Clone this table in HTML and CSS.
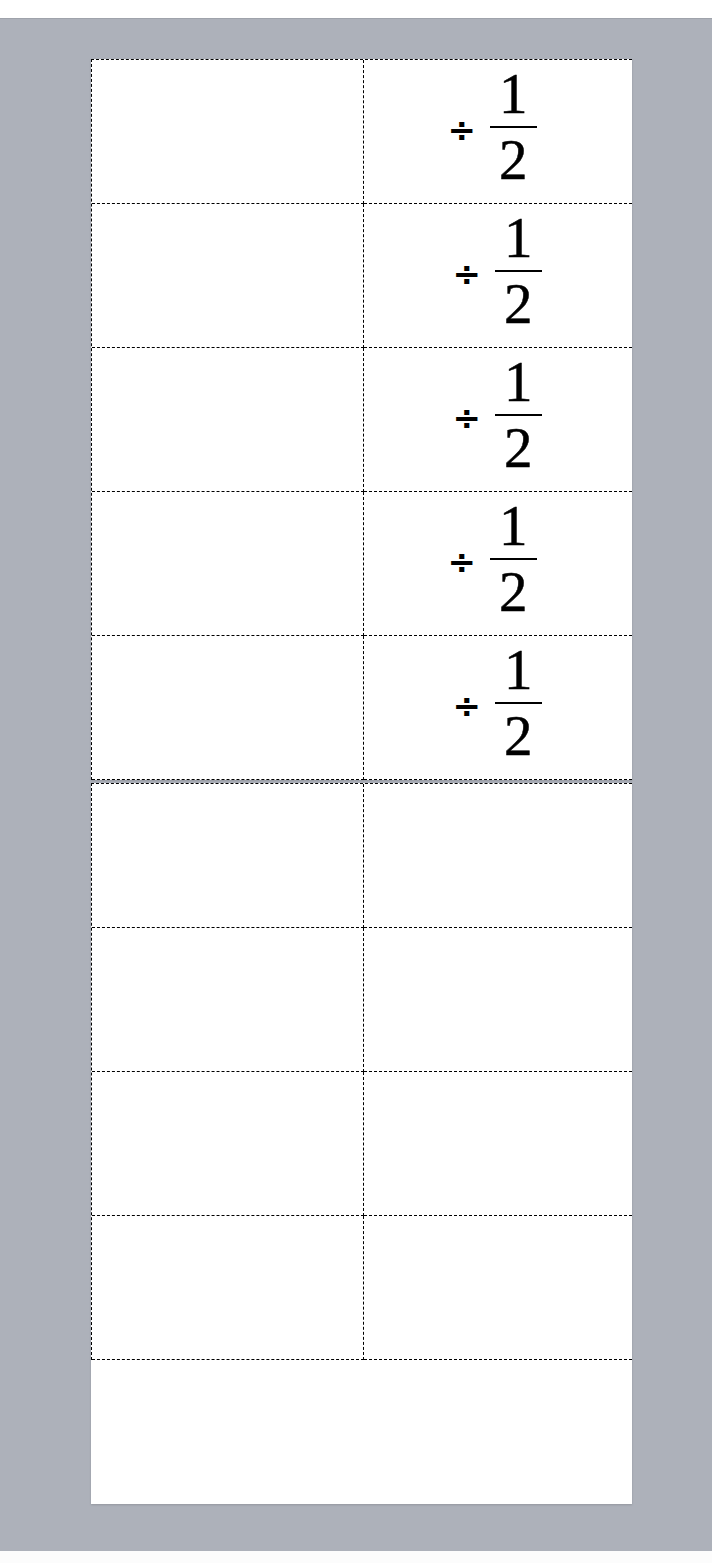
FILE: index.html
```html
<!DOCTYPE html>
<html lang="en">
<head>
    <meta charset="UTF-8">
    <meta name="viewport" content="width=device-width, initial-scale=1.0">
    <title>Division cards</title>
    <link rel="stylesheet" href="styles.css">
</head>
<body>
    <div class="topbar"></div>
    <div class="viewer">
        <div class="page">
            <div class="grid">
                <div class="cell"></div>
                <div class="cell answer"><span class="expr shift-a"><span class="op">÷</span><span class="frac"><span class="num">1</span><span class="den">2</span></span></span></div>
                <div class="cell"></div>
                <div class="cell answer"><span class="expr shift-b"><span class="op">÷</span><span class="frac"><span class="num">1</span><span class="den">2</span></span></span></div>
                <div class="cell"></div>
                <div class="cell answer"><span class="expr shift-b"><span class="op">÷</span><span class="frac"><span class="num">1</span><span class="den">2</span></span></span></div>
                <div class="cell"></div>
                <div class="cell answer"><span class="expr shift-a"><span class="op">÷</span><span class="frac"><span class="num">1</span><span class="den">2</span></span></span></div>
                <div class="cell"></div>
                <div class="cell answer"><span class="expr shift-b"><span class="op">÷</span><span class="frac"><span class="num">1</span><span class="den">2</span></span></span></div>
            </div>
        </div>
        <div class="page">
            <div class="grid">
                <div class="cell"></div>
                <div class="cell"></div>
                <div class="cell"></div>
                <div class="cell"></div>
                <div class="cell"></div>
                <div class="cell"></div>
                <div class="cell"></div>
                <div class="cell"></div>
            </div>
        </div>
    </div>
    <div class="bottombar"></div>
</body>
</html>
```

FILE: styles.css
```css
body {
    margin: 0;
    background-color: #ffffff;
    font-family: "Liberation Serif", serif;
}
.topbar {
    height: 19px;
    background-color: #ffffff;
    border-bottom: 1px solid #9fa3ab;
    box-sizing: border-box;
}
.viewer {
    background-color: #adb1ba;
    padding: 40px 0 47px 91px;
    display: flex;
    flex-direction: column;
    gap: 3px;
}
.page {
    width: 541px;
    height: 721px;
    background-color: #ffffff;
    box-shadow: 0 1px 2px rgba(0, 0, 0, 0.15);
}
.grid {
    display: grid;
    grid-template-columns: 272px 1fr;
    grid-auto-rows: 144px;
    border-top: 1px dashed #000;
    border-left: 1px dashed #000;
}
.cell {
    box-sizing: border-box;
    border-bottom: 1px dashed #000;
}
.cell:nth-child(odd) {
    border-right: 1px dashed #000;
}
.answer {
    display: flex;
    align-items: center;
    justify-content: center;
}
.expr {
    display: flex;
    align-items: center;
    gap: 14px;
    margin-top: -10px;
}
.shift-a {
    margin-left: -12px;
}
.shift-b {
    margin-left: -2px;
}
.op {
    font-family: "DejaVu Sans", sans-serif;
    font-size: 34px;
    font-weight: bold;
    line-height: 1;
    margin-top: 4px;
}
.frac {
    display: flex;
    flex-direction: column;
    align-items: center;
    font-family: "Liberation Serif", "Times New Roman", serif;
    font-size: 57px;
    line-height: 1.107;
    -webkit-text-stroke: 0.5px #000;
}
.num {
    padding: 0 9px;
    border-bottom: 2px solid #000;
}
.bottombar {
    height: 12px;
    background-color: #fcfcfc;
}
```
